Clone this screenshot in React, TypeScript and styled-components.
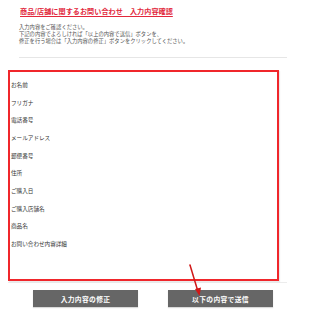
import React from "react";
import styled, { createGlobalStyle } from "styled-components";

const GlobalStyle = createGlobalStyle`
  html, body {
    margin: 0;
    padding: 0;
    background: #fff;
  }
  body {
    font-family: "Noto Sans CJK JP", "Noto Sans", sans-serif;
    color: #333;
  }
`;

const Page = styled.div`
  position: relative;
  width: 306px;
  height: 320px;
  overflow: hidden;
`;

const Header = styled.header`
  padding: 8px 19px 0 19px;
`;

const Title = styled.h1`
  margin: 0 0 0 1px;
  font-size: 7.1px;
  line-height: 7px;
  font-weight: 700;
  color: #e2283c;
  text-decoration: underline;
  text-underline-offset: 1.5px;
  letter-spacing: 0.05px;
  white-space: nowrap;
`;

const Lead = styled.p`
  margin: 9px 0 0 0;
  font-size: 5.3px;
  line-height: 7px;
  color: #555;
  white-space: nowrap;
`;

const Divider = styled.hr`
  margin: 12px 0 0 0;
  border: none;
  border-top: 1px solid #e6e6e6;
`;

const FormWrap = styled.section`
  margin: 12px 0 0 8px;
  width: 279px;
  border-bottom: 1px solid #ececec;
  padding-bottom: 1px;
`;

const Confirm = styled.dl`
  margin: 0;
  box-sizing: border-box;
  width: 271px;
  height: 211px;
  border: 2px solid #f0262b;
  box-shadow: 1px 1px 1px rgba(0, 0, 0, 0.08);
  padding: 4px 0 0 1px;
  display: flex;
  flex-direction: column;
`;

const Label = styled.dt`
  height: 17.7px;
  display: flex;
  align-items: center;
  font-size: 5.6px;
  color: #333;
  white-space: nowrap;
`;

const Actions = styled.div`
  display: flex;
  justify-content: center;
  gap: 30px;
  margin-top: 7px;
`;

const Button = styled.button`
  width: 105px;
  height: 17px;
  border: none;
  padding: 0;
  background: #666;
  color: #fff;
  font-family: inherit;
  font-size: 6.8px;
  font-weight: 700;
  letter-spacing: 0.3px;
  box-shadow: 0 1px 1px rgba(0, 0, 0, 0.15);
`;

const Arrow = styled.svg`
  position: absolute;
  left: 185px;
  top: 262px;
  pointer-events: none;
`;

const labels = [
  "お名前",
  "フリガナ",
  "電話番号",
  "メールアドレス",
  "郵便番号",
  "住所",
  "ご購入日",
  "ご購入店舗名",
  "商品名",
  "お問い合わせ内容詳細",
];

export default function App() {
  return (
    <>
      <GlobalStyle />
      <Page>
        <Header>
          <Title>商品/店舗に関するお問い合わせ　入力内容確認</Title>
          <Lead>
            入力内容をご確認ください。
            <br />
            下記の内容でよろしければ「以上の内容で送信」ボタンを、
            <br />
            修正を行う場合は「入力内容の修正」ボタンをクリックしてください。
          </Lead>
          <Divider />
        </Header>
        <FormWrap>
          <Confirm>
            {labels.map((label) => (
              <Label key={label}>{label}</Label>
            ))}
          </Confirm>
        </FormWrap>
        <Actions>
          <Button>入力内容の修正</Button>
          <Button>以下の内容で送信</Button>
        </Actions>
        <Arrow width="20" height="38" viewBox="0 0 20 38">
          <line x1="5" y1="3" x2="12.5" y2="28" stroke="#d01818" strokeWidth="1.5" strokeLinecap="round" />
          <polygon points="10,27 16,25.5 14.5,34" fill="#d01818" />
        </Arrow>
      </Page>
    </>
  );
}
